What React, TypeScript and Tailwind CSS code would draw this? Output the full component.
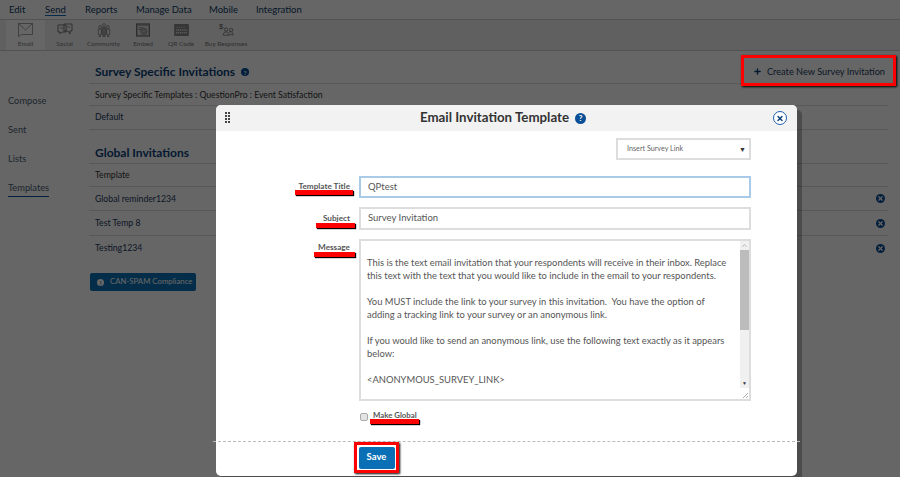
import { ChevronUp, Plus, X } from "lucide-react"

const NAV = [
  { label: "Edit", cls: "w-[36px]" },
  { label: "Send", cls: "w-[40px]", active: true },
  { label: "Reports", cls: "w-[51px]" },
  { label: "Manage Data", cls: "w-[73px]" },
  { label: "Mobile", cls: "w-[47px]" },
  { label: "Integration", cls: "w-[70px]" },
]

function EmailIcon() {
  return (
    <svg width="15" height="14" viewBox="0 0 15 14" fill="none" stroke="#888" strokeWidth="0.8">
      <path d="M0.5 0.5h14v11h-11l-3 2z" />
      <path d="M0.5 0.5 7.500 7 14.500 0.500" />
    </svg>
  )
}

function SocialIcon() {
  return (
    <svg width="16" height="14" viewBox="0 0 16 14" fill="none" stroke="#777" strokeWidth="1">
      <path d="M1 2h8v7H5l-2 2V9H1z" />
      <path d="M7 1h8v7h-2v3l-2-3H7z" />
      <path d="M3 5h4M9 4h4" stroke="#999" />
    </svg>
  )
}

function CommunityIcon() {
  return (
    <svg width="14" height="14" viewBox="0 0 16 16" fill="none" stroke="#888" strokeWidth="1">
      <circle cx="8" cy="2.5" r="1.800" />
      <circle cx="3.500" cy="4.500" r="1.600" />
      <circle cx="12.500" cy="4.500" r="1.600" />
      <path d="M5.800 5.500h4.400v7.500H9v3H7v-3H5.800z" fill="#aaa" />
      <path d="M1.500 7H5v6H4v2.500H2.500V13h-1zM11 7h3.500v6h-1v2.500H12V13h-1z" />
    </svg>
  )
}

function EmbedIcon() {
  return (
    <svg width="14" height="14" viewBox="0 0 16 15" fill="none">
      <rect x="0.5" y="0.5" width="15" height="14" fill="#aaa" stroke="#666" />
      <rect x="2" y="3" width="12" height="10" fill="#ddd" />
      <circle cx="9" cy="9" r="3.500" stroke="#777" />
      <circle cx="9" cy="9" r="1.600" stroke="#777" />
      <path d="M3 5h5M3 7h3" stroke="#888" />
    </svg>
  )
}

function QrIcon() {
  return (
    <svg width="15" height="12" viewBox="0 0 16 13" fill="none">
      <rect width="16" height="13" rx="1" fill="#888" />
      <path d="M3 3.500h10" stroke="#ddd" strokeDasharray="1 1" />
      <path d="M2 6.500h12M2 9.500h12" stroke="#ddd" strokeWidth="1.400" strokeDasharray="1.500 0.700" />
    </svg>
  )
}

function BuyIcon() {
  return (
    <svg width="15" height="16" viewBox="0 0 16 17" fill="none" stroke="#777" strokeWidth="0.9">
      <text x="0" y="7" fontSize="8" fill="#555" stroke="none" fontFamily="Liberation Sans, sans-serif">$</text>
      <circle cx="7.500" cy="8" r="1.800" />
      <circle cx="13" cy="8.500" r="1.800" />
      <path d="M4.500 14c0-2.500 1.500-3.500 3-3.500 1.800 0 3 1 3 3.500zM10.500 11c1-1 4.500-1 4.800 2.500H11" />
    </svg>
  )
}

const TOOLS = [
  { label: "Email", icon: <EmailIcon />, cls: "w-[39px] bg-white" },
  { label: "Social", icon: <SocialIcon />, cls: "ml-[1px] w-[37px]" },
  { label: "Community", icon: <CommunityIcon />, cls: "w-[41px]" },
  { label: "Embed", icon: <EmbedIcon />, cls: "w-[38px]" },
  { label: "QR Code", icon: <QrIcon />, cls: "w-[38px]" },
  { label: "Buy Responses", icon: <BuyIcon />, cls: "w-[52px]" },
]

function HelpDot({ cls }: { cls: string }) {
  return (
    <span className={`inline-flex items-center justify-center rounded-full bg-[#0a4f96] font-bold text-white ${cls}`}>?</span>
  )
}

function Row({ label, remove, cls }: { label: string; remove?: boolean; cls: string }) {
  return (
    <div className={`flex items-center justify-between border-b border-[#ddd] pl-[6px] pr-[3px] text-[8.7px] ${cls}`}>
      <span>{label}</span>
      {remove && (
        <span className="flex h-[9px] w-[9px] items-center justify-center rounded-full bg-[#0a4f96]">
          <X size={7} strokeWidth={4} className="text-white" />
        </span>
      )}
    </div>
  )
}

function Mark({ cls }: { cls: string }) {
  return <span className={`absolute bg-[#f00] shadow-[1px_1px_1px_#000] ${cls}`} />
}

const MESSAGE = `This is the text email invitation that your respondents will receive in their inbox. Replace this text with the text that you would like to include in the email to your respondents.

You MUST include the link to your survey in this invitation.  You have the option of adding a tracking link to your survey or an anonymous link.

If you would like to send an anonymous link, use the following text exactly as it appears below:

<ANONYMOUS_SURVEY_LINK>`

export default function App() {
  return (
    <div className="relative h-[477px] w-[900px] overflow-hidden bg-white font-['Lato',sans-serif]">
      {/* page behind the dialog */}
      <div className="flex h-[20px] items-center border-b border-[#ccc] bg-white pl-[9px] pt-[1px] text-[9.5px] text-[#0b3a66]">
        {NAV.map((n) => (
          <span key={n.label} className={n.cls}>
            <span className={n.active ? "border-b border-[#0a6fb8]" : ""}>{n.label}</span>
          </span>
        ))}
      </div>
      <div className="flex h-[31px] border-b border-[#ccc] bg-[#f0f0f0] pl-[6px]">
        {TOOLS.map((t) => (
          <div key={t.label} className={`flex flex-col items-center justify-end pb-[2px] ${t.cls}`}>
            <div className="flex h-[18px] items-center">{t.icon}</div>
            <span className="whitespace-nowrap text-[6.5px] leading-[9px] text-[#777]">{t.label}</span>
          </div>
        ))}
      </div>

      <div className="flex">
        <div className="flex w-[89px] flex-col items-start gap-[14px] pl-[8px] pt-[42px] text-[9.3px] leading-[15px] text-[#4b5f75]">
          <span>Compose</span>
          <span>Sent</span>
          <span>Lists</span>
          <span className="border-b border-[#0a4f96] pb-[1px]">Templates</span>
        </div>
        <div className="w-[799px]">
          <div className="flex h-[33px] items-center justify-between border-b border-[#ddd] pl-[6px] pr-[3px] pt-[10px]">
            <span className="flex items-center gap-[6px] text-[12px] font-bold text-[#0a3f78]">
              Survey Specific Invitations
              <HelpDot cls="h-[8px] w-[8px] text-[6px]" />
            </span>
            <span className="flex items-center gap-[5px] text-[9.2px] text-[#1c3b5c]">
              <Plus size={9} strokeWidth={3.5} className="text-[#0a3f78]" />
              Create New Survey Invitation
            </span>
          </div>
          <Row label="Survey Specific Templates : QuestionPro : Event Satisfaction" cls="h-[22px] text-[#333]" />
          <Row label="Default" cls="h-[24px] pb-[1px] text-[#1c3b5c]" />
          <div className="mt-[9px] flex h-[25px] items-center border-b border-[#ddd] pl-[6px] pt-[3px] text-[12px] font-bold text-[#0a3f78]">
            Global Invitations
          </div>
          <Row label="Template" cls="h-[23px] text-[#333]" />
          <Row label="Global reminder1234" remove cls="h-[24px] text-[#1c3b5c]" />
          <Row label="Test Temp 8" remove cls="h-[25px] text-[#1c3b5c]" />
          <Row label="Testing1234" remove cls="h-[24px] border-b-0 text-[#1c3b5c]" />
          <div className="ml-[1px] mt-[13px] flex h-[18px] w-[106px] items-center gap-[6px] whitespace-nowrap rounded-[2px] bg-[#0a72b8] pl-[7px] text-[7.8px] text-white">
            <span className="flex h-[7px] w-[7px] items-center justify-center rounded-full bg-white text-[6px] font-bold text-[#0a72b8]">!</span>
            CAN-SPAM Compliance
          </div>
        </div>
      </div>

      {/* overlay */}
      <div className="absolute inset-0 bg-black/60" />

      {/* annotation on the page button */}
      <span className="absolute left-[741px] top-[55px] h-[31px] w-[155px] border-[3px] border-[#f00] shadow-[1px_1px_2px_#000]" />

      {/* dialog */}
      <div className="absolute left-[216px] top-[105px] h-[371px] w-[581px] rounded-[5px] bg-white shadow-[5px_5px_0_rgba(0,0,0,0.25)]">
        <div className="relative flex h-[26px] items-center justify-center gap-[6px] rounded-t-[5px] bg-[#f2f2f2] pr-[7px] text-[13.300px] font-bold text-[#333]">
          <span className="absolute left-[9px] top-[7px] grid grid-cols-2 gap-[1px]">
            {Array.from({ length: 8 }).map((_, i) => (
              <span key={i} className="h-[2px] w-[2px] bg-[#444]" />
            ))}
          </span>
          Email Invitation Template
          <HelpDot cls="h-[11px] w-[11px] text-[8px]" />
          <span className="absolute right-[10px] top-[6px] flex h-[14px] w-[14px] items-center justify-center rounded-full border border-[#1f5fb0] bg-white">
            <span className="flex h-[8px] w-[8px] items-center justify-center">
              <X size={9} strokeWidth={4} className="text-[#0a3f78]" />
            </span>
          </span>
        </div>

        <div className="flex justify-end pr-[46px] pt-[7px]">
          <div className="flex h-[22px] w-[135px] items-center justify-between border-2 border-[#ddd] pl-[9px] pr-[3px] text-[7.200px] text-[#666]">
            Insert Survey Link
            <span className="text-[7px] text-[#333]">▼</span>
          </div>
        </div>

        <div className="mt-[16px] flex items-center">
          <span className="relative mb-[2px] w-[134px] text-right text-[8.200px] font-bold leading-[10px] text-[#555]">
            Template Title
            <Mark cls="right-[-3px] top-[9px] h-[5px] w-[58px]" />
          </span>
          <div className="ml-[9px] flex h-[22px] w-[392px] items-center border-2 border-[#a9cbe8] pl-[7px] text-[9.500px] text-[#555]">QPtest</div>
        </div>
        <div className="mt-[9px] flex items-center">
          <span className="relative mb-[2px] w-[134px] text-right text-[8.200px] font-bold leading-[10px] text-[#555]">
            Subject
            <Mark cls="right-[-5px] top-[10px] h-[5px] w-[39px]" />
          </span>
          <div className="ml-[9px] flex h-[23px] w-[392px] items-center border-2 border-[#ddd] pl-[7px] text-[9.500px] text-[#555]">Survey Invitation</div>
        </div>
        <div className="mt-[9px] flex items-start">
          <span className="relative mt-[3px] w-[134px] text-right text-[8.200px] font-bold leading-[10px] text-[#555]">
            Message
            <Mark cls="right-[-5px] top-[10px] h-[5px] w-[41px]" />
          </span>
          <div className="relative ml-[9px] flex h-[162px] w-[392px] border-2 border-[#ddd]">
            <p className="w-[380px] overflow-hidden whitespace-pre-wrap pl-[6px] pr-[8px] pt-[15px] text-[9.400px] leading-[13px] text-[#555]">{MESSAGE}</p>
            <div className="mb-[11px] flex w-[9px] flex-col items-center bg-[#f0f0f0]">
              <ChevronUp size={7} strokeWidth={3} className="mt-[1px] text-[#aaa]" />
              <div className="mt-[1px] h-[80px] w-full bg-[#bcbcbc]" />
              <span className="mt-auto mb-[1px] text-[5px] leading-[7px] text-[#333]">▼</span>
            </div>
            <svg className="absolute bottom-0 right-0" width="9" height="9" viewBox="0 0 9 9" stroke="#888" strokeWidth="0.7">
              <path d="M3 8 8 3M6 8 8 6" />
            </svg>
          </div>
        </div>
        <div className="ml-[144px] mt-[9px] flex items-center gap-[5px]">
          <span className="h-[8px] w-[8px] rounded-[2px] border border-[#aaa] bg-[#e4e4e4]" />
          <span className="relative mb-[4px] text-[7.800px] font-bold leading-[10px] text-[#555]">
            Make Global
            <Mark cls="-left-[3px] top-[9px] h-[5px] w-[49px]" />
          </span>
        </div>

        <div className="-mx-[3px] mt-[17px] border-t border-dashed border-[#bbb]" />
        <div className="ml-[138px] flex h-[31px] w-[45px] items-center justify-center border-[3px] border-[#f00] shadow-[1px_1px_2px_#000]">
          <span className="flex h-[22px] w-[36px] items-center justify-center rounded-[2px] bg-[#0a6fb5] text-[9.500px] font-bold text-white">Save</span>
        </div>
      </div>
    </div>
  )
}
